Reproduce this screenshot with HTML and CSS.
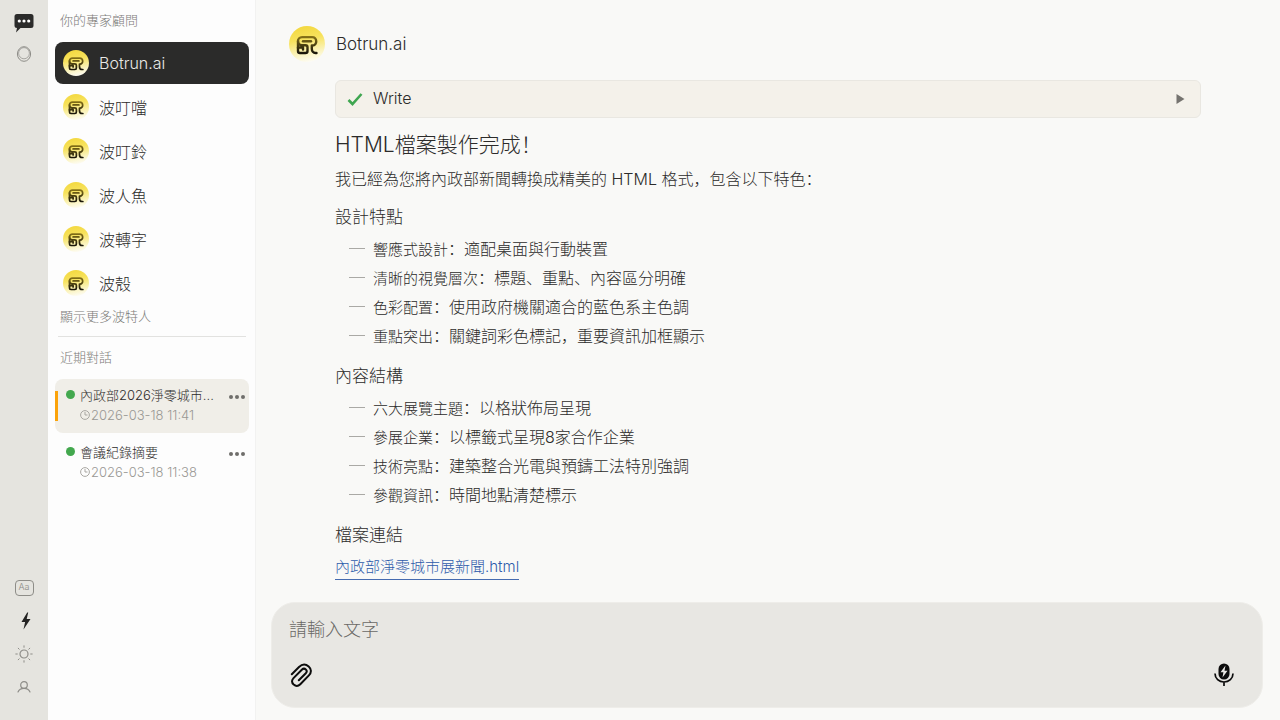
FILE: index.html
```html
<!DOCTYPE html>
<html lang="zh-CN">
  <head>
    <meta charset="UTF-8" />
    <meta name="viewport" content="width=device-width, initial-scale=1.0" />
    <title>Botrun.ai</title>
    <link rel="stylesheet" href="styles.css">
  </head>
  <body>
    <!-- Shared logo -->
    <svg class="defs" width="0" height="0" aria-hidden="true">
      <defs>
        <linearGradient id="sun" x1="0.4" y1="0" x2="0.6" y2="1">
          <stop offset="0" stop-color="#f3d840" />
          <stop offset="0.35" stop-color="#f7e25c" />
          <stop offset="0.75" stop-color="#fbf4c0" />
          <stop offset="1" stop-color="#fdfcf6" />
        </linearGradient>
        <linearGradient id="ink" gradientUnits="userSpaceOnUse" x1="0" y1="10" x2="0" y2="28">
          <stop offset="0" stop-color="#8a7518" />
          <stop offset="0.5" stop-color="#4a3f10" />
          <stop offset="1" stop-color="#15120a" />
        </linearGradient>
        <symbol id="logo" viewBox="0 0 36 36">
          <circle cx="18" cy="18" r="18" fill="url(#sun)" />
          <g fill="none" stroke="url(#ink)" stroke-width="2.400" stroke-linecap="round" stroke-linejoin="round">
            <path d="M22 15.200H14" />
            <path d="M27.500 27h-1c-2.200 0-3.700-1.800-3.700-4.200v-3.300h.7a3.800 3.800 0 0 0 3.700-4.200c0-2.600-1.600-4.200-4-4.200H13a4 4 0 0 0-4 4c0 2.500 1.600 4.100 4 4.100h3.500a2 2 0 0 1 2 2V25a2 2 0 0 1-2 2H11a2 2 0 0 1-2-2v-3.500h5v2" />
            <path d="M9 15v7" />
          </g>
        </symbol>
      </defs>
    </svg>

    <div class="app">
      <!-- Icon rail -->
      <nav class="rail">
        <button class="rail-btn" aria-label="對話">
          <svg width="20" height="20" viewBox="0 0 20 20">
            <path d="M3 1h14a2.500 2.500 0 0 1 2.500 2.500v9A2.500 2.500 0 0 1 17 15H6.500L2 19.500l1-4.500A2.500 2.500 0 0 1 .5 12.500v-9A2.500 2.500 0 0 1 3 1z" fill="#2b2b2a" />
            <circle cx="5.300" cy="8" r="1.600" fill="#fff" />
            <circle cx="10" cy="8" r="1.600" fill="#fff" />
            <circle cx="14.700" cy="8" r="1.600" fill="#fff" />
          </svg>
        </button>
        <button class="rail-btn" aria-label="波特人">
          <svg width="16" height="16" viewBox="0 0 16 16" fill="none" stroke="#8e8d88">
            <ellipse cx="8" cy="8" rx="6.600" ry="7.300" />
            <ellipse cx="8" cy="7.200" rx="5.400" ry="5.600" stroke-width="0.700" />
          </svg>
        </button>
        <span class="rail-space"></span>
        <button class="rail-btn" aria-label="字體大小"><span class="font-box">Aa</span></button>
        <button class="rail-btn" aria-label="快速模式">
          <svg class="bolt" width="10" height="18" viewBox="0 0 10 18">
            <path d="M6.200.5L.5 10h3.600L2.500 17.500 9.500 7H5.700l1.500-6.500z" fill="#232322" />
          </svg>
        </button>
        <button class="rail-btn" aria-label="主題">
          <svg width="18" height="18" viewBox="0 0 18 18" fill="none" stroke="#8e8d88" stroke-linecap="round">
            <circle cx="9" cy="9" r="4" stroke-width="1.200" />
            <path d="M9 .8v1.500M9 15.700v1.500M.8 9h1.500M15.700 9h1.500M3.200 3.200l1 1M13.800 13.800l1 1M3.200 14.800l1-1M13.800 4.200l1-1" />
          </svg>
        </button>
        <button class="rail-btn" aria-label="帳號">
          <svg width="14" height="14" viewBox="0 0 14 14" fill="none" stroke="#8e8d88" stroke-width="1.200" stroke-linecap="round">
            <circle cx="7" cy="5" r="3.300" />
            <path d="M1 12c1-2.400 3.300-3.700 6-3.700s5 1.300 6 3.700" />
          </svg>
        </button>
      </nav>

      <!-- Sidebar -->
      <aside class="sidebar">
        <h2 class="side-title">你的專家顧問</h2>
        <div class="experts">
          <button class="expert active"><svg class="avatar"><use href="#logo" /></svg>Botrun.ai</button>
          <button class="expert"><svg class="avatar"><use href="#logo" /></svg>波叮噹</button>
          <button class="expert"><svg class="avatar"><use href="#logo" /></svg>波叮鈴</button>
          <button class="expert"><svg class="avatar"><use href="#logo" /></svg>波人魚</button>
          <button class="expert"><svg class="avatar"><use href="#logo" /></svg>波轉字</button>
          <button class="expert"><svg class="avatar"><use href="#logo" /></svg>波殼</button>
        </div>
        <button class="more-experts">顯示更多波特人</button>
        <h2 class="side-title recent">近期對話</h2>
        <div class="chats">
          <div class="chat current">
            <span class="dot"></span>
            <div class="chat-info">
              <a class="chat-name" href="#">內政部2026淨零城市...</a>
              <time class="chat-time">
                <svg width="10" height="10" viewBox="0 0 10 10" fill="none" stroke="#a9a7a2"><circle cx="5" cy="5" r="4.400" /><path d="M5 2v3h2.500" /></svg>2026-03-18 11:41
              </time>
            </div>
            <button class="dots" aria-label="更多選項"><i></i><i></i><i></i></button>
          </div>
          <div class="chat">
            <span class="dot"></span>
            <div class="chat-info">
              <a class="chat-name" href="#">會議紀錄摘要</a>
              <time class="chat-time">
                <svg width="10" height="10" viewBox="0 0 10 10" fill="none" stroke="#a9a7a2"><circle cx="5" cy="5" r="4.400" /><path d="M5 2v3h2.500" /></svg>2026-03-18 11:38
              </time>
            </div>
            <button class="dots" aria-label="更多選項"><i></i><i></i><i></i></button>
          </div>
        </div>
      </aside>

      <!-- Conversation -->
      <main class="main">
        <section class="messages">
          <header class="sender">
            <svg class="sender-logo"><use href="#logo" /></svg>
            <span>Botrun.ai</span>
          </header>
          <article class="reply">
            <button class="tool">
              <svg width="16" height="14" viewBox="0 0 16 14" fill="none" stroke="#3fa650" stroke-width="2.600"><path d="M1.500 8l4 4L14.500 2" /></svg>
              <span class="tool-name">Write</span>
              <svg width="9" height="10" viewBox="0 0 9 10"><path d="M.5 0v10L8.500 5z" fill="#75736f" /></svg>
            </button>
            <h1>HTML檔案製作完成！</h1>
            <p>我已經為您將內政部新聞轉換成精美的 HTML 格式，包含以下特色：</p>
            <h3>設計特點</h3>
            <ul>
              <li><strong>響應式設計</strong>：適配桌面與行動裝置</li>
              <li><strong>清晰的視覺層次</strong>：標題、重點、內容區分明確</li>
              <li><strong>色彩配置</strong>：使用政府機關適合的藍色系主色調</li>
              <li><strong>重點突出</strong>：關鍵詞彩色標記，重要資訊加框顯示</li>
            </ul>
            <h3>內容結構</h3>
            <ul>
              <li><strong>六大展覽主題</strong>：以格狀佈局呈現</li>
              <li><strong>參展企業</strong>：以標籤式呈現8家合作企業</li>
              <li><strong>技術亮點</strong>：建築整合光電與預鑄工法特別強調</li>
              <li><strong>參觀資訊</strong>：時間地點清楚標示</li>
            </ul>
            <h3>檔案連結</h3>
            <a class="file-link" href="#">內政部淨零城市展新聞.html</a>
          </article>
        </section>

        <form class="composer">
          <textarea class="prompt" rows="1" placeholder="請輸入文字" aria-label="請輸入文字"></textarea>
          <div class="composer-tools">
            <button type="button" class="icon-btn" aria-label="附加檔案">
              <svg width="24" height="24" viewBox="0 0 24 24" fill="none" stroke="#0c0c0c" stroke-width="2" stroke-linecap="round" stroke-linejoin="round">
                <path d="M2.800 11.300l7.200-7.300c3-3 6.800-3.100 9.700-.6 2.900 2.600 2.900 6.200.2 9l-8.600 8.800c-2.100 2.100-4.500 2.200-6.600.4-2.200-2-2.200-4.400-.2-6.500l8.300-8.400c1.400-1.400 2.800-1.400 4-.3 1.300 1.200 1.200 2.500 0 3.800l-7 7.100" />
              </svg>
            </button>
            <button type="button" class="icon-btn" aria-label="語音輸入">
              <svg width="20" height="24" viewBox="0 0 20 24">
                <rect x="4.500" y=".5" width="11" height="16" rx="5.500" fill="#0c0c0c" />
                <path d="M11.500 2.500L6.500 9.200h2.900L8.500 14.500l5-6.700h-3z" fill="#e8e7e3" />
                <path d="M1 10.500c0 5 4 8.500 9 8.500s9-3.500 9-8.500M10 19v4" fill="none" stroke="#0c0c0c" stroke-width="1.700" />
              </svg>
            </button>
          </div>
        </form>
      </main>
    </div>
  </body>
</html>
```

FILE: styles.css
```css
/* Base Styles */
* {
  margin: 0;
  padding: 0;
  box-sizing: border-box;
}

body {
  font-family: Inter, "Noto Sans CJK SC", sans-serif;
  font-weight: 300;
  font-size: 16px;
  color: #2c2b2a;
  background: #f9f9f7;
}

button,
textarea {
  font: inherit;
  color: inherit;
  background: none;
  border: none;
}

button {
  cursor: pointer;
}

svg {
  display: block;
  flex-shrink: 0;
}

.defs {
  position: absolute;
}

.app {
  display: flex;
  min-height: 100vh;
}

/* Icon rail */
.rail {
  width: 48px;
  flex-shrink: 0;
  display: flex;
  flex-direction: column;
  align-items: center;
  padding: 9px 0 17px;
  background: #e5e4df;
}
.rail-btn {
  width: 32px;
  height: 33px;
  display: flex;
  align-items: center;
  justify-content: center;
}
.rail-btn:first-child {
  height: 28px;
}
.rail-space {
  flex: 1;
}
.font-box {
  width: 19px;
  height: 16px;
  border: 1px solid #8e8d88;
  border-radius: 4px;
  font-size: 9px;
  line-height: 12px;
  color: #8e8d88;
}
.bolt {
  margin-left: 3px;
}

/* Sidebar */
.sidebar {
  width: 208px;
  flex-shrink: 0;
  padding: 8px 6px 8px 7px;
  background: #fdfdfd;
  border-right: 1px solid #f2f2f1;
}
.side-title {
  padding-left: 5px;
  font-size: 13px;
  font-weight: 300;
  line-height: 24px;
  color: #7c7b78;
}
.experts {
  margin-top: 10px;
  display: flex;
  flex-direction: column;
  gap: 2px;
}
.expert {
  height: 42px;
  padding: 0 8px 1px;
  display: flex;
  align-items: center;
  gap: 10px;
  border-radius: 8px;
  text-align: left;
}
.expert.active {
  color: #e8e8e6;
  background: #2b2b2a;
}
.avatar {
  width: 26px;
  height: 26px;
}
.more-experts {
  display: block;
  width: 100%;
  padding-left: 5px;
  font-size: 13px;
  line-height: 24px;
  text-align: left;
  color: #7c7b78;
}
.recent {
  margin: 8px 3px 0;
  padding: 8px 0 0 2px;
  border-top: 1px solid #e2e2e0;
}
.chats {
  margin-top: 10px;
  display: flex;
  flex-direction: column;
  gap: 3px;
}
.chat {
  height: 54px;
  padding: 6px 4px 6px 11px;
  display: flex;
  border-radius: 8px;
  position: relative;
}
.chat.current {
  background: #f0eee8;
}
.chat.current::before {
  content: "";
  position: absolute;
  left: 0;
  top: 12px;
  width: 3px;
  height: 30px;
  background: #fba30a;
}
.dot {
  width: 9px;
  height: 9px;
  margin: 5px 5px 0 0;
  border-radius: 50%;
  background: #43a84e;
}
.chat-info {
  flex: 1;
}
.chat-name {
  display: block;
  font-size: 13px;
  line-height: 20px;
  white-space: nowrap;
  color: #2c2b2a;
  text-decoration: none;
}
.chat-time {
  display: flex;
  align-items: center;
  gap: 1px;
  font-size: 13px;
  line-height: 20px;
  color: #999894;
}
.dots {
  align-self: flex-start;
  height: 24px;
  display: flex;
  align-items: center;
  gap: 2px;
}
.dots i {
  width: 4px;
  height: 4px;
  border-radius: 50%;
  background: #6f6e6b;
}

/* Conversation */
.main {
  flex: 1;
  min-width: 0;
  display: flex;
  flex-direction: column;
  padding: 26px 17px 12px 15px;
}
.messages {
  flex: 1;
  padding: 0 62px 0 18px;
}
.sender {
  display: flex;
  align-items: center;
  gap: 11px;
  font-size: 17px;
}
.sender-logo {
  width: 36px;
  height: 36px;
}
.reply {
  padding: 18px 0 0 46px;
}
.tool {
  width: 100%;
  height: 38px;
  padding: 0 15px 0 11px;
  display: flex;
  align-items: center;
  gap: 10px;
  border: 1px solid #e9e7e1;
  border-radius: 6px;
  background: #f4f1ea;
}
.tool-name {
  flex: 1;
  padding-bottom: 3px;
  text-align: left;
}
h1 {
  margin-top: 11px;
  font-size: 21px;
  font-weight: 300;
  line-height: 32px;
}
p {
  margin-top: 6px;
  line-height: 24px;
}
h3 {
  margin-top: 14px;
  font-size: 17px;
  font-weight: 300;
  line-height: 24px;
}
ul {
  margin-top: 8px;
  list-style: none;
  display: flex;
  flex-direction: column;
  gap: 5px;
}
ul + h3 {
  margin-top: 16px;
}
li {
  padding-left: 38px;
  line-height: 24px;
  position: relative;
}
li::before {
  content: "";
  position: absolute;
  left: 14px;
  top: 11px;
  width: 16px;
  height: 1px;
  background: #aaa9a5;
}
strong {
  font-size: 15px;
  font-weight: 300;
  line-height: 16px;
}
.file-link {
  display: inline-block;
  margin-top: 8px;
  font-size: 15px;
  line-height: 24px;
  color: #2f5cab;
  text-decoration: none;
  border-bottom: 1px solid #456bb0;
}

/* Composer */
.composer {
  padding: 13px 17px 18px;
  border: 1px solid #eeede9;
  border-radius: 24px;
  background: #e8e7e3;
}
.prompt {
  display: block;
  width: 100%;
  height: 28px;
  font-size: 18px;
  line-height: 28px;
  resize: none;
  outline: none;
}
.prompt::placeholder {
  color: #6a6966;
}
.composer-tools {
  margin-top: 17px;
  padding-right: 11px;
  display: flex;
  justify-content: space-between;
}
.icon-btn {
  height: 28px;
}
```
